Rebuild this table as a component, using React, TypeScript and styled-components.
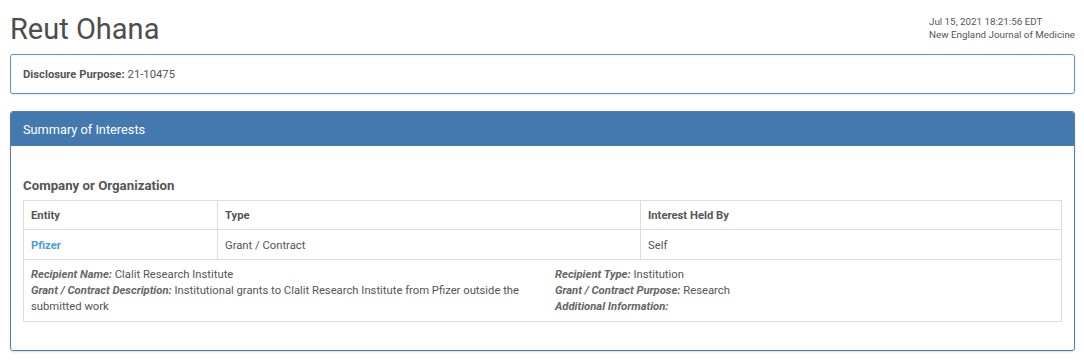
import styled, { createGlobalStyle } from "styled-components";

// 공통 스타일
const GlobalStyle = createGlobalStyle`
    body {
        margin: 0;
        background: #fff;
        font-family: Roboto, "Liberation Sans", Arial, sans-serif;
        color: #555;
    }
`;

const DETAILS_LEFT = [
    { label: "Recipient Name:", value: "Clalit Research Institute" },
    {
        label: "Grant / Contract Description:",
        value: "Institutional grants to Clalit Research Institute from Pfizer outside the submitted work",
    },
];

const DETAILS_RIGHT = [
    { label: "Recipient Type:", value: "Institution" },
    { label: "Grant / Contract Purpose:", value: "Research" },
    { label: "Additional Information:", value: "" },
];

const App = () => {
    return (
        <>
            <GlobalStyle />
            <Page>
                {/* 상단 헤더 */}
                <Header>
                    <Name>Reut Ohana</Name>
                    <Meta>
                        <div>Jul 15, 2021 18:21:56 EDT</div>
                        <div>New England Journal of Medicine</div>
                    </Meta>
                </Header>

                <InfoBox>
                    <strong>Disclosure Purpose:</strong> 21-10475
                </InfoBox>

                {/* 관심사 요약 패널 */}
                <Panel>
                    <PanelHeading>Summary of Interests</PanelHeading>
                    <PanelBody>
                        <SectionTitle>Company or Organization</SectionTitle>
                        <Table>
                            <Row>
                                <HeadCell>Entity</HeadCell>
                                <HeadCell>Type</HeadCell>
                                <HeadCell $last>Interest Held By</HeadCell>
                            </Row>
                            <Row>
                                <Cell>
                                    <EntityLink>Pfizer</EntityLink>
                                </Cell>
                                <Cell>Grant / Contract</Cell>
                                <Cell $last>Self</Cell>
                            </Row>
                            <Details>
                                <DetailCol>
                                    {DETAILS_LEFT.map((d) => (
                                        <DetailLine key={d.label}>
                                            <em>{d.label}</em> {d.value}
                                        </DetailLine>
                                    ))}
                                </DetailCol>
                                <DetailCol>
                                    {DETAILS_RIGHT.map((d) => (
                                        <DetailLine key={d.label}>
                                            <em>{d.label}</em> {d.value}
                                        </DetailLine>
                                    ))}
                                </DetailCol>
                            </Details>
                        </Table>
                    </PanelBody>
                </Panel>
            </Page>
        </>
    );
};

export default App;

// 스타일 컴포넌트
const Page = styled.div`
    padding: 0 9px 12px 10px;
`;

const Header = styled.div`
    display: flex;
    justify-content: space-between;
    align-items: flex-start;
    height: 54px;
`;

const Name = styled.h1`
    margin: 10px 0 0 0;
    font-size: 29px;
    font-weight: 400;
    line-height: 38px;
    color: #4d4d4d;
`;

const Meta = styled.div`
    margin-top: 15px;
    font-size: 9.8px;
    line-height: 13px;
    text-align: left;
    color: #555;
`;

const InfoBox = styled.div`
    height: 40px;
    box-sizing: border-box;
    border: 1px solid #5b8dc6;
    border-radius: 3px;
    padding: 0 12px;
    display: flex;
    align-items: center;
    font-size: 11.25px;
    color: #555;
    box-shadow: 0 1px 1px rgba(0, 0, 0, 0.08);

    strong {
        font-weight: 700;
        margin-right: 3px;
    }
`;

const Panel = styled.div`
    margin-top: 17px;
    border: 1px solid #4a7fba;
    border-radius: 3px;
    box-shadow: 0 1px 2px rgba(0, 0, 0, 0.15);
    overflow: hidden;
`;

const PanelHeading = styled.div`
    background: #4479b0;
    color: #fff;
    height: 34px;
    display: flex;
    align-items: center;
    padding: 0 12px;
    font-size: 12.75px;
`;

const PanelBody = styled.div`
    padding: 31px 12px 28px;
`;

const SectionTitle = styled.h4`
    margin: 0 0 6px;
    font-size: 13.25px;
    font-weight: 700;
    line-height: 17px;
    color: #555;
`;

const Table = styled.div`
    border: 1px solid #ddd;
    font-size: 11.25px;
    color: #555;
`;

const Row = styled.div`
    display: grid;
    grid-template-columns: 194px 423px 1fr;
    border-bottom: 1px solid #ddd;
`;

const HeadCell = styled.div<{ $last?: boolean }>`
    height: 28px;
    display: flex;
    align-items: center;
    padding: 0 7px;
    font-weight: 700;
    border-right: ${(p) => (p.$last ? "none" : "1px solid #ddd")};
`;

const Cell = styled(HeadCell)`
    height: 29px;
    padding-top: 1px;
    box-sizing: border-box;
    font-weight: 400;
`;

const EntityLink = styled.a`
    color: #4a9be0;
    font-weight: 700;
    text-decoration: none;
    cursor: pointer;
`;

const Details = styled.div`
    display: grid;
    grid-template-columns: 515px 1fr;
    column-gap: 9px;
    padding: 7px 7px 6px;
`;

const DetailCol = styled.div`
    line-height: 16px;
`;

const DetailLine = styled.div`
    em {
        font-style: italic;
        font-weight: 700;
        color: #666;
    }
`;
